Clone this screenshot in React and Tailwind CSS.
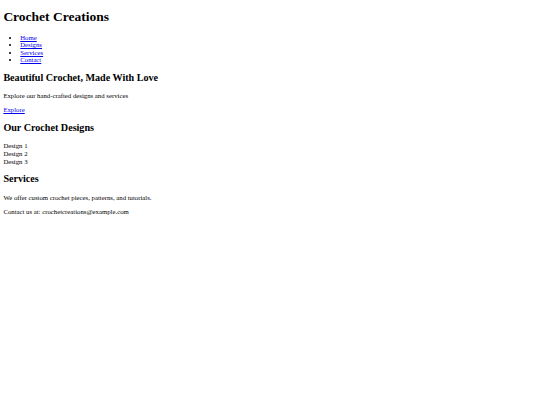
export default function App() {
  return (
    <div className="m-[3.375px] text-[6.75px] leading-[1.12] text-black bg-white" style={{ fontFamily: '"Liberation Serif", "Times New Roman", serif' }}>
      <header>
        <h1 className="text-[2em] leading-[1.15] font-bold my-[0.67em]">Crochet Creations</h1>
        <nav>
          <ul className="list-disc pl-[16.875px] my-[1em]">
            <li><a href="#home" className="text-[#0000ee] underline">Home</a></li>
            <li><a href="#designs" className="text-[#0000ee] underline">Designs</a></li>
            <li><a href="#services" className="text-[#0000ee] underline">Services</a></li>
            <li><a href="#contact" className="text-[#0000ee] underline">Contact</a></li>
          </ul>
        </nav>
      </header>
      <section>
        <h2 className="text-[1.5em] leading-[1.15] font-bold my-[0.83em]">Beautiful Crochet, Made With Love</h2>
        <p className="my-[1em]">Explore our hand-crafted designs and services</p>
        <a href="#designs" className="text-[#0000ee] underline">Explore</a>
      </section>
      <section>
        <h2 className="text-[1.5em] leading-[1.15] font-bold my-[0.83em]">Our Crochet Designs</h2>
        <div>Design 1</div>
        <div>Design 2</div>
        <div>Design 3</div>
      </section>
      <section>
        <h2 className="text-[1.5em] leading-[1.15] font-bold my-[0.83em]">Services</h2>
        <p className="my-[1em]">We offer custom crochet pieces, patterns, and tutorials.</p>
      </section>
      <footer>
        <p className="my-[1em]">Contact us at: crochetcreations@example.com</p>
      </footer>
    </div>
  )
}
